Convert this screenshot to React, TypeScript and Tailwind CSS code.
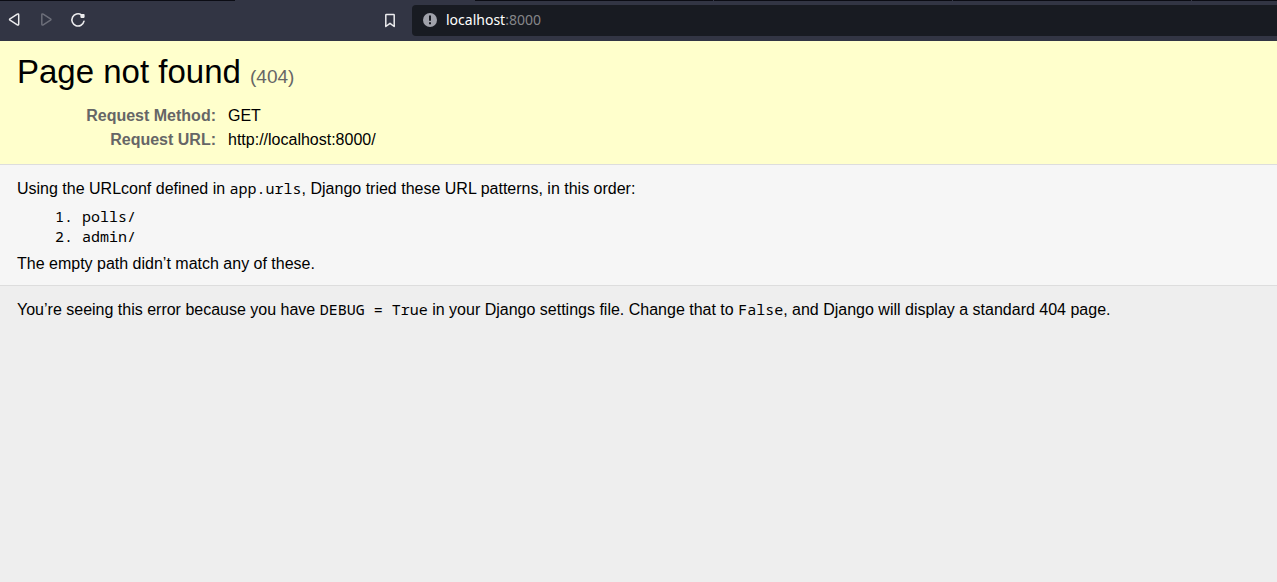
import type { ReactNode } from "react";

function Mono({ children }: { children: ReactNode }) {
  return (
    <code className="font-['Noto_Sans_Mono','Liberation_Mono',monospace] text-[15px] leading-none">
      {children}
    </code>
  );
}

function TabStrip() {
  return (
    <div className="flex h-px bg-[#323544]" aria-hidden="true">
      <div className="w-[235px] bg-[#0b0c14]" />
      <div className="w-[240px]" />
      <div className="flex flex-1 gap-px">
        <div className="w-[238px] bg-[#0b0c14]" />
        <div className="w-[238px] bg-[#0b0c14]" />
        <div className="w-[238px] bg-[#0b0c14]" />
        <div className="flex-1 bg-[#0b0c14]" />
      </div>
    </div>
  );
}

function BrowserBar() {
  return (
    <header className="bg-[#323544] pb-px">
      <TabStrip />
      <nav className="flex h-[39px] items-center text-[#ececee]" aria-label="Browser">
        <div className="flex items-center gap-3 pb-px pl-1">
          <button type="button" aria-label="Back" className="size-5">
            <svg viewBox="0 0 20 20" className="size-5" fill="none" stroke="currentColor" strokeWidth="1.5" strokeLinejoin="round">
              <path d="M13.3 4.2c.8-.5 1.4-.2 1.4.7v9.2c0 .9-.6 1.2-1.4.7L6 10.2c-.6-.4-.6-1 0-1.4z" />
            </svg>
          </button>
          <button type="button" aria-label="Forward" disabled className="size-5 text-[#6c6e79]">
            <svg viewBox="0 0 20 20" className="size-5" fill="none" stroke="currentColor" strokeWidth="1.5" strokeLinejoin="round">
              <path d="M7.2 4.2c-.8-.5-1.4-.2-1.4.7v9.2c0 .9.6 1.2 1.4.7l7.3-4.6c.6-.4.6-1 0-1.4z" />
            </svg>
          </button>
          <button type="button" aria-label="Reload" className="size-5">
            <svg viewBox="0 0 20 20" className="size-5" fill="none" stroke="currentColor" strokeWidth="1.6" strokeLinecap="round">
              <path d="M16 11.2A6.1 6.1 0 1 1 13.4 4.8" />
              <path d="M13.2 4.9 15.8 4.7v2.4h-2.6z" fill="currentColor" strokeWidth="1.6" strokeLinejoin="round" />
            </svg>
          </button>
        </div>
        <button type="button" aria-label="Bookmark this page" className="ml-[292px] size-5">
          <svg viewBox="0 0 20 20" className="size-5" fill="none" stroke="currentColor" strokeWidth="1.5" strokeLinejoin="round">
            <path d="M5.8 4.1q0-.6.6-.6h7.2q.6 0 .6.6v11.4L10 12.3l-4.2 3.2z" />
          </svg>
        </button>
        <div className="ml-3 flex h-[31px] flex-1 items-center gap-2 rounded-l bg-[#181b22] pb-px pl-2.5">
          <svg viewBox="0 0 16 16" className="size-4" role="img" aria-label="Not secure">
            <circle cx="8" cy="8" r="7" fill="#a0a2aa" />
            <path d="M7 3.6h2v5.2H7zM7 10.2h2v2H7z" fill="#181b22" />
          </svg>
          <p className="font-['Noto_Sans',sans-serif] text-sm text-[#858689]">
            <span className="text-white">localhost</span>:8000
          </p>
        </div>
      </nav>
    </header>
  );
}

export default function App() {
  return (
    <div className="flex min-h-screen flex-col bg-[#eeeeee] font-['Liberation_Sans',Arial,sans-serif] text-base leading-5 text-black">
      <BrowserBar />
      <main>
        <section className="border-b border-[#dddddd] bg-[#ffffcc] px-[17px] pt-[11px] pb-2.5">
          <h1 className="text-[33px] leading-10">
            Page not found <span className="text-[19px] leading-none text-[#666666]">(404)</span>
          </h1>
          <table className="mt-3.5 leading-5">
            <tbody>
              <tr>
                <th scope="row" className="w-[211px] pr-3 pb-1 text-right text-[#666666]">Request Method:</th>
                <td className="pb-1">GET</td>
              </tr>
              <tr>
                <th scope="row" className="pr-3 pb-1 text-right text-[#666666]">Request URL:</th>
                <td className="pb-1">http://localhost:8000/</td>
              </tr>
            </tbody>
          </table>
        </section>
        <section className="border-b border-[#dddddd] bg-[#f6f6f6] px-[17px] pt-3.5 pb-[11px]">
          <p>
            Using the URLconf defined in <Mono>app.urls</Mono>, Django tried these URL patterns, in this order:
          </p>
          <ol className="mt-[7px] mb-2 list-decimal pl-[65px] font-['Noto_Sans_Mono','Liberation_Mono',monospace] text-[15px]">
            <li>polls/</li>
            <li>admin/</li>
          </ol>
          <p>The empty path didn’t match any of these.</p>
        </section>
        <section className="px-[17px] pt-3.5">
          <p>
            You’re seeing this error because you have <Mono>DEBUG = True</Mono> in your Django settings file. Change
            that to <Mono>False</Mono>, and Django will display a standard 404 page.
          </p>
        </section>
      </main>
    </div>
  );
}
